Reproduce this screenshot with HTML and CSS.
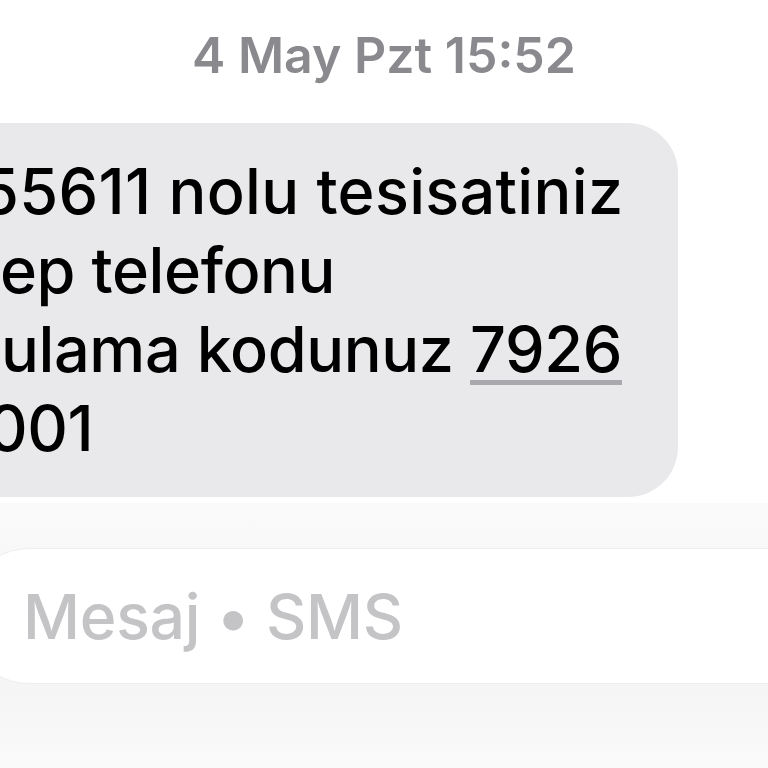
FILE: index.html
```html
<!DOCTYPE html>
<html lang="tr">
<head>
<meta charset="utf-8">
<title>Mesajlar</title>
<link rel="stylesheet" href="styles.css">
</head>
<body>
<div class="screen">
  <div class="timestamp">4 May Pzt 15:52</div>
  <div class="bubble">
    <div class="line l1">55611 nolu tesisatiniz</div>
    <div class="line l2">ep telefonu</div>
    <div class="line l3">ulama kodunuz <span class="code">7926</span></div>
    <div class="line l4">001</div>
  </div>
  <div class="composer">
    <div class="input"><span class="placeholder">Mesaj • SMS</span></div>
  </div>
</div>
</body>
</html>
```
FILE: styles.css
```css
html, body {
  margin: 0;
  padding: 0;
  background: #ffffff;
}
body {
  width: 768px;
  height: 768px;
  overflow: hidden;
  font-family: Inter, "Noto Sans", "Liberation Sans", sans-serif;
}
.screen {
  display: flex;
  flex-direction: column;
  height: 768px;
}
.timestamp {
  padding-top: 25px;
  height: 60px;
  line-height: 60px;
  font-size: 50px;
  font-weight: 600;
  color: #8a8a8e;
  text-align: center;
}
.bubble {
  margin-top: 38px;
  margin-left: -60px;
  width: 678px;
  padding: 29px 0 29px 60px;
  border-radius: 50px;
  background: #e9e9eb;
  overflow: hidden;
  font-size: 63px;
  font-weight: 500;
  letter-spacing: -0.4px;
  line-height: 79px;
  color: #000;
}
.line {
  white-space: nowrap;
}
.l1 { margin-left: -20px; letter-spacing: 0.3px; }
.l2 { margin-left: 0; }
.l3 { margin-left: 1px; }
.l4 { margin-left: -13px; }
.code {
  text-decoration: underline;
  text-decoration-color: #a9a9ad;
  text-decoration-thickness: 5px;
  text-underline-offset: 8px;
}
.composer {
  flex: 1;
  margin-top: 6px;
  padding-top: 45px;
  background: linear-gradient(#fafafa 0%, #f8f8f8 20%, #f5f5f5 70%, #fafafa 100%);
}
.input {
  margin-left: -38px;
  width: 900px;
  height: 134px;
  border: 1px solid #eeeeee;
  border-radius: 68px;
  background: #ffffff;
  display: flex;
  align-items: center;
  padding-left: 60px;
  box-sizing: content-box;
}
.placeholder {
  font-size: 62.5px;
  font-weight: 500;
  letter-spacing: -0.3px;
  color: #c4c4c6;
  white-space: nowrap;
}
```
